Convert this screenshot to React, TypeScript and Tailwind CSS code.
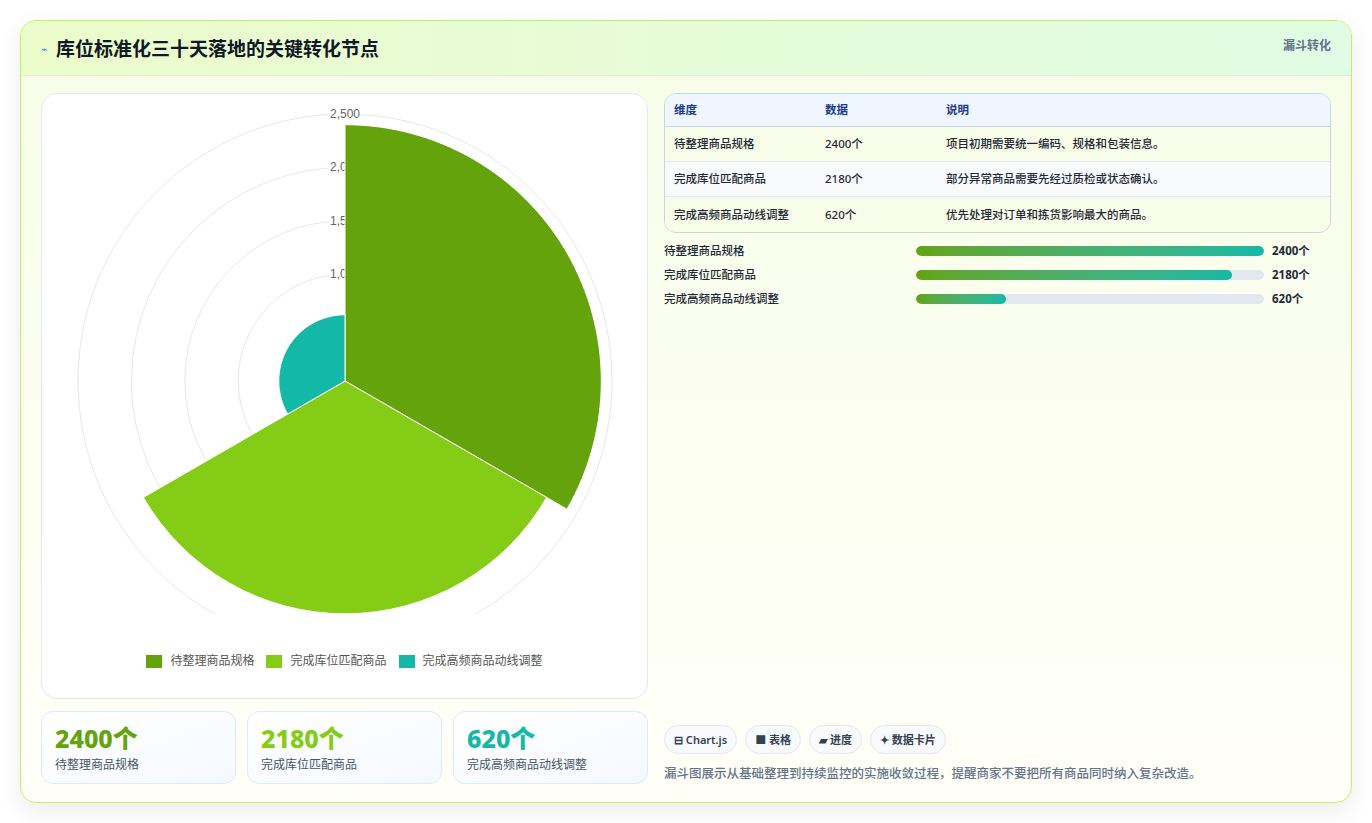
import React from "react";

const font = { fontFamily: '"Noto Sans","Noto Sans CJK SC",sans-serif' };

function arc(cx: number, cy: number, r: number, a0: number, a1: number) {
  const rad = (d: number) => (d * Math.PI) / 180;
  const x0 = cx + r * Math.cos(rad(a0)), y0 = cy + r * Math.sin(rad(a0));
  const x1 = cx + r * Math.cos(rad(a1)), y1 = cy + r * Math.sin(rad(a1));
  return `M${cx},${cy} L${x0},${y0} A${r},${r} 0 0 1 ${x1},${y1} Z`;
}

function Chart() {
  const cx = 303, cy = 287, k = 267 / 2500;
  const segs = [
    { v: 2400, c: "#65a30d", a: -90 },
    { v: 2180, c: "#84cc16", a: 30 },
    { v: 620, c: "#14b8a6", a: 150 },
  ];
  return (
    <svg width="606" height="520" viewBox="0 0 606 520">
      {[500, 1000, 1500, 2000, 2500].map((t) => (
        <circle key={t} cx={cx} cy={cy} r={t * k} fill="none" stroke="#e5e7eb" strokeWidth="1" />
      ))}
      {[1000, 1500, 2000, 2500].map((t) => (
        <g key={t}>
          <rect x={cx - 16} y={cy - t * k - 7} width="32" height="13" fill="white" />
          <text x={cx} y={cy - t * k + 4} textAnchor="middle" fontSize="12" fill="#666" fontFamily="Liberation Sans, sans-serif">
            {t.toLocaleString("en-US")}
          </text>
        </g>
      ))}
      {segs.map((s) => (
        <path key={s.v} d={arc(cx, cy, s.v * k, s.a, s.a + 120)} fill={s.c} stroke="white" strokeWidth="1" />
      ))}
    </svg>
  );
}

const rows = [
  ["待整理商品规格", "2400个", "项目初期需要统一编码、规格和包装信息。", 2400],
  ["完成库位匹配商品", "2180个", "部分异常商品需要先经过质检或状态确认。", 2180],
  ["完成高频商品动线调整", "620个", "优先处理对订单和拣货影响最大的商品。", 620],
] as const;

export default function App() {
  return (
    <div className="w-[1372px] h-[823px] bg-white p-5 pb-5" style={font}>
      <div className="h-[783px] rounded-2xl border border-[#bef264] bg-gradient-to-b from-[#f7fde8] to-[#fffff8] shadow-[0_8px_24px_rgba(0,0,0,0.08)] overflow-hidden flex flex-col">
        <div className="h-[55px] flex items-start justify-between px-5 pt-[14px] bg-gradient-to-r from-[#ecfccb] to-[#e0fce4] border-b border-[#e2ecd8]">
          <div className="flex items-center gap-2">
            <span className="text-[#3b82f6] text-[11px]">⌁</span>
            <span className="text-[19px] font-bold text-[#111827]">库位标准化三十天落地的关键转化节点</span>
          </div>
          <span className="text-[12px] font-semibold text-[#64748b] mt-[2px]">漏斗转化</span>
        </div>
        <div className="flex-1 flex gap-4 px-5 pt-[17px] pb-[18px]">
          <div className="w-[607px] flex flex-col gap-3">
            <div className="h-[606px] bg-white rounded-2xl border border-[#e5e7eb] flex flex-col items-center">
              <Chart />
              <div className="flex items-center gap-3 text-[12px] text-[#555] mt-[38px]">
                <span className="flex items-center gap-2"><span className="w-4 h-[13px] bg-[#65a30d]" />待整理商品规格</span>
                <span className="flex items-center gap-2"><span className="w-4 h-[13px] bg-[#84cc16]" />完成库位匹配商品</span>
                <span className="flex items-center gap-2"><span className="w-4 h-[13px] bg-[#14b8a6]" />完成高频商品动线调整</span>
              </div>
            </div>
            <div className="grid grid-cols-3 gap-[11px]">
              {[["2400个", "text-[#65a30d]", "待整理商品规格"], ["2180个", "text-[#84cc16]", "完成库位匹配商品"], ["620个", "text-[#14b8a6]", "完成高频商品动线调整"]].map(([v, c, l]) => (
                <div key={v} className="h-[73px] rounded-xl border border-[#dbeafe] bg-gradient-to-br from-white to-[#f5f9ff] px-[13px] pt-[10px]">
                  <div className={`text-[25px] font-extrabold leading-[32px] ${c}`}>{v}</div>
                  <div className="text-[12px] text-[#475569] mt-[2px]">{l}</div>
                </div>
              ))}
            </div>
          </div>
          <div className="flex-1 flex flex-col">
            <div className="rounded-xl border border-[#cbd5e1] overflow-hidden text-[11.5px]">
              <div className="flex h-[33px] items-center bg-[#eff6ff] text-[#1e3a8a] font-semibold border-b border-[#cbd5e1]">
                <div className="w-[160px] pl-[9px]">维度</div><div className="w-[121px]">数据</div><div>说明</div>
              </div>
              {rows.map((r, i) => (
                <div key={r[0]} className={`flex h-[35px] items-center text-[#1f2937] font-medium ${i === 1 ? "bg-[#f8fafc]" : "bg-[#f7fde8]"} ${i < 2 ? "border-b border-[#e2e8f0]" : ""}`}>
                  <div className="w-[160px] pl-[9px]">{r[0]}</div><div className="w-[121px]">{r[1]}</div><div>{r[2]}</div>
                </div>
              ))}
            </div>
            <div className="flex flex-col gap-[12px] mt-[12px]">
              {rows.map((r) => (
                <div key={r[0]} className="flex items-center h-[12px] text-[11.5px]">
                  <div className="w-[252px] text-[#1f2937] font-medium">{r[0]}</div>
                  <div className="w-[348px] h-[10px] rounded-full bg-[#e2e8f0] overflow-hidden">
                    <div className="h-full rounded-full bg-gradient-to-r from-[#65a30d] to-[#14b8a6]" style={{ width: `${(r[3] / 2400) * 100}%` }} />
                  </div>
                  <div className="ml-2 font-bold text-[#1f2937]">{r[1]}</div>
                </div>
              ))}
            </div>
            <div className="mt-auto flex gap-2 text-[11px] font-semibold text-[#334155]">
              {["⊟ Chart.js", "■ 表格", "▰ 进度", "✦ 数据卡片"].map((t) => (
                <span key={t} className="h-[29px] px-[9px] flex items-center rounded-full border border-[#e2e8f0] bg-[#f8fafc]">{t}</span>
              ))}
            </div>
            <div className="mt-[11px] text-[12.5px] text-[#64748b] font-medium">漏斗图展示从基础整理到持续监控的实施收敛过程，提醒商家不要把所有商品同时纳入复杂改造。</div>
          </div>
        </div>
      </div>
    </div>
  );
}
